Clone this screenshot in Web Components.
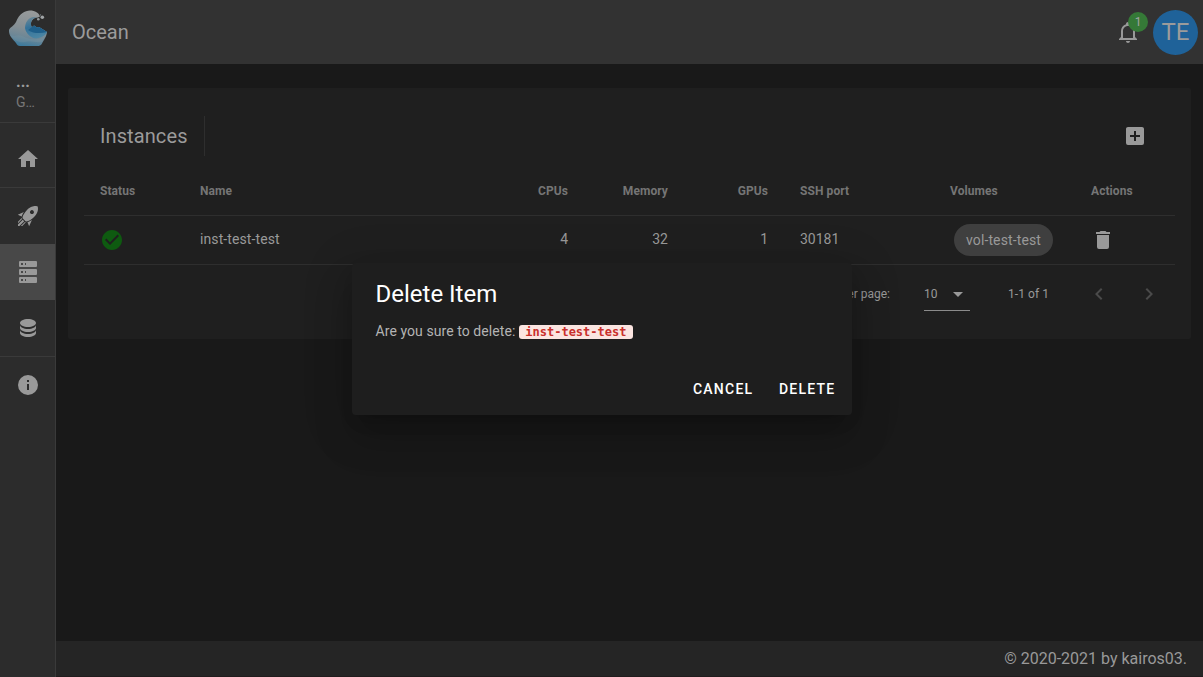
<!DOCTYPE html>
<html lang="en">
<head>
<meta charset="utf-8">
<title>Ocean</title>
<style>
html,body{margin:0;height:100%;overflow:hidden;background:#191919;font-family:Roboto,sans-serif}
</style>
</head>
<body>
<ocean-app></ocean-app>
<script>
const ICONS = {
  home:'M10,20V14H14V20H19V12H22L12,3L2,12H5V20H10Z',
  rocket:'M13.13 22.19L11.5 18.36C13.07 17.78 14.54 17 15.9 16.09L13.13 22.19M5.64 12.5L1.81 10.87L7.91 8.1C7 9.46 6.22 10.93 5.64 12.5M21.61 2.39C21.61 2.39 16.66 .269 11 5.93C8.81 8.12 7.5 10.53 6.65 12.64C6.37 13.39 6.56 14.21 7.11 14.77L9.24 16.89C9.79 17.45 10.61 17.63 11.36 17.35C13.5 16.53 15.88 15.19 18.07 13C23.73 7.34 21.61 2.39 21.61 2.39M14.54 9.46C13.76 8.68 13.76 7.41 14.54 6.63S16.59 5.85 17.37 6.63C18.14 7.41 18.15 8.68 17.37 9.46C16.59 10.24 15.32 10.24 14.54 9.46M6.24 22L9.88 18.36C9.54 18.27 9.21 18.12 8.91 17.91L4.83 22H6.24M2 22H3.41L8.18 17.24L6.76 15.83L2 20.59V22M2 19.17L6.09 15.09C5.88 14.79 5.73 14.47 5.64 14.12L2 17.76V19.17Z',
  server:'M4,1H20A1,1 0 0,1 21,2V6A1,1 0 0,1 20,7H4A1,1 0 0,1 3,6V2A1,1 0 0,1 4,1M4,9H20A1,1 0 0,1 21,10V14A1,1 0 0,1 20,15H4A1,1 0 0,1 3,14V10A1,1 0 0,1 4,9M4,17H20A1,1 0 0,1 21,18V22A1,1 0 0,1 20,23H4A1,1 0 0,1 3,22V18A1,1 0 0,1 4,17M9,5H10V3H9V5M9,13H10V11H9V13M9,21H10V19H9V21M5,3V5H7V3H5M5,11V13H7V11H5M5,19V21H7V19H5Z',
  database:'M12,3C7.58,3 4,4.79 4,7C4,9.21 7.58,11 12,11C16.42,11 20,9.21 20,7C20,4.79 16.42,3 12,3M4,9V12C4,14.21 7.58,16 12,16C16.42,16 20,14.21 20,12V9C20,11.21 16.42,13 12,13C7.58,13 4,11.21 4,9M4,14V17C4,19.21 7.58,21 12,21C16.42,21 20,19.21 20,17V14C20,16.21 16.42,18 12,18C7.58,18 4,16.21 4,14Z',
  info:'M13,9H11V7H13M13,17H11V11H13M12,2A10,10 0 0,0 2,12A10,10 0 0,0 12,22A10,10 0 0,0 22,12A10,10 0 0,0 12,2Z',
  bell:'M10 21H14C14 22.1 13.1 23 12 23S10 22.1 10 21M21 19V20H3V19L5 17V11C5 7.9 7 5.2 10 4.3V4C10 2.9 10.9 2 12 2S14 2.9 14 4V4.3C17 5.2 19 7.9 19 11V17L21 19M17 11C17 8.2 14.8 6 12 6S7 8.2 7 11V18H17V11Z',
  plusbox:'M17,13H13V17H11V13H7V11H11V7H13V11H17M19,3H5C3.89,3 3,3.89 3,5V19A2,2 0 0,0 5,21H19A2,2 0 0,0 21,19V5C21,3.89 20.1,3 19,3Z',
  check:'M12 2C6.5 2 2 6.5 2 12S6.5 22 12 22 22 17.5 22 12 17.5 2 12 2M10 17L5 12L6.41 10.59L10 14.17L17.59 6.58L19 8L10 17Z',
  trash:'M19,4H15.5L14.5,3H9.5L8.5,4H5V6H19M6,19A2,2 0 0,0 8,21H16A2,2 0 0,0 18,19V7H6V19Z',
  down:'M7,10L12,15L17,10H7Z',
  left:'M15.41,16.58L10.83,12L15.41,7.41L14,6L8,12L14,18L15.41,16.58Z',
  right:'M8.59,16.58L13.17,12L8.59,7.41L10,6L16,12L10,18L8.59,16.58Z'
};
function define(name, css, html){
  const t = document.createElement('template');
  t.innerHTML = `<style>*{box-sizing:border-box}${css}</style>${html}`;
  customElements.define(name, class extends HTMLElement{
    constructor(){ super(); this.attachShadow({mode:'open'}).append(t.content.cloneNode(true)); }
  });
}
customElements.define('md-icon', class extends HTMLElement{
  constructor(){ super(); this.attachShadow({mode:'open'}); }
  connectedCallback(){
    this.shadowRoot.innerHTML = `<style>:host{display:block;width:24px;height:24px;flex:none;color:#999}svg{display:block}</style>
    <svg width="24" height="24" viewBox="0 0 24 24" fill="currentColor" fill-rule="nonzero"><path d="${ICONS[this.getAttribute('name')]}"/></svg>`;
  }
});

define('wave-logo', ':host{display:block;width:40px;height:40px}svg{display:block}', `
<svg width="40" height="40" viewBox="0 0 40 40">
  <defs>
    <linearGradient id="w" x1=".6" y1="0" x2=".4" y2="1"><stop offset="0" stop-color="#989b9c"/><stop offset=".5" stop-color="#858f94"/><stop offset=".75" stop-color="#6d8796"/><stop offset="1" stop-color="#3c7a9d"/></linearGradient>
    <linearGradient id="s" x1=".2" y1="0" x2=".5" y2="1"><stop offset="0" stop-color="#6c8896"/><stop offset=".45" stop-color="#33729a"/><stop offset="1" stop-color="#4c86a4"/></linearGradient>
  </defs>
  <path fill="url(#w)" d="M1 22C2 19 6 18 8 14C11 6 17 2.500 22 2.500C27 2.500 31 5 32 8.500L30 9.500C25 9.500 23 13 23 16C23 19 24 20 26 17.500L29 19.500L31 19L39 24C38.500 29 35.500 32 34 35.500C33 37.500 31.500 38 29 38H12C10 38 9 37 8 35C5 31 .5 28 1 22Z"/>
  <path fill="url(#s)" d="M26 9C20 9 17 15 17 20C18 26 23 30 28 30.500C33 30 37 28 39 24L31 19L29 19.500L26 17.500C24.500 20 23 19 23 16C23 13 24 10.500 29 9.500Z"/>
  <path fill="#1f5f8a" d="M20 22L26 17.500L29 19.500L31 19L39 24C33 25.500 26 26 20 22Z"/>
  <path fill="#7895a3" d="M2 27C7 29 10 26 14 28C20 31 28 33 37 29L34 34C26 35 22 32 17 34C12 35 6 33 2 27Z" opacity=".35"/>
  <circle cx="34.300" cy="9.300" r="1.800" fill="#a0a4a6"/>
  <circle cx="30.300" cy="11.200" r="1.300" fill="#939a9d"/>
  <circle cx="32.500" cy="6.900" r=".7" fill="#7d8588"/>
</svg>`);

define('nav-item', `
:host{display:flex;height:56px;align-items:center;justify-content:center}
:host([active]){background:#484848}`, '<slot></slot>');

define('app-sidebar', `
:host{display:flex;flex-direction:column;width:56px;background:#2c2c2c;border-right:1px solid #3a3a3a}
wave-logo{margin:8px 0 0 8px}
.user{height:74px;padding:26px 0 0 16px;color:#9b9b9b}
.n{font-size:16px;font-weight:700;line-height:16px;height:19px}
.g{font-size:14px;line-height:18px;color:#777}
hr{margin:0;border:0;height:1px;background:#3a3a3a;flex:none}
.first{margin-top:8px} nav-item{padding-left:1px;flex:none}`, `
<wave-logo></wave-logo>
<div class="user"><div class="n">...</div><div class="g">G…</div></div>
<hr>
<nav-item class="first"><md-icon name="home"></md-icon></nav-item>
<hr>
<nav-item><md-icon name="rocket"></md-icon></nav-item>
<nav-item active><md-icon name="server"></md-icon></nav-item>
<nav-item><md-icon name="database"></md-icon></nav-item>
<hr>
<nav-item><md-icon name="info"></md-icon></nav-item>`);

define('app-bar', `
:host{display:flex;height:64px;background:#323232;align-items:center;padding:0 5px 0 16px;flex:none}
.t{font-size:20px;line-height:30px;color:#9b9b9b;flex:1}
.bell{position:relative;margin-right:13.5px}
.badge{position:absolute;left:12.5px;top:-8px;width:20px;height:20px;border-radius:10px;background:#357937;color:#a3a3a3;font-size:12px;line-height:20px;text-align:center}
.av{width:45px;height:45px;border-radius:50%;background:#1f6299;color:#9b9b9b;font-size:24px;line-height:45px;text-align:center}`, `
<div class="t">Ocean</div>
<div class="bell"><md-icon name="bell"></md-icon><span class="badge">1</span></div>
<div class="av">TE</div>`);

define('volume-chip', `:host{display:inline-block;margin-left:4px;height:32px;padding:0 12px;border-radius:16px;background:#3f3f3f;color:#999;font-size:14px;line-height:32px;letter-spacing:.12px;white-space:nowrap}`, '<slot></slot>');

define('instance-table', `
:host{display:block}
.row{display:grid;grid-template-columns:100px 300px 100px 100px 100px 150px 141px 100px;height:49px;border-bottom:1px solid #2e2e2e;align-items:center;font-size:14px;color:#999}
.row>*{padding:0 16px}
.row>.x{padding-bottom:2px}
.name{letter-spacing:.1px}
.head{font-size:12px;font-weight:700;color:#757575;letter-spacing:.08px}
.r{text-align:right}
md-icon.ok{color:#0e5a10} .i{display:flex}`, `
<div class="row head"><div>Status</div><div>Name</div><div class="r">CPUs</div><div class="r">Memory</div><div class="r">GPUs</div><div>SSH port</div><div>Volumes</div><div>Actions</div></div>
<div class="row"><div class="i"><md-icon class="ok" name="check"></md-icon></div><div class="x name">inst-test-test</div><div class="r x">4</div><div class="r x">32</div><div class="r x">1</div><div class="x">30181</div><div><volume-chip>vol-test-test</volume-chip></div><div class="i"><md-icon name="trash"></md-icon></div></div>`);

define('table-pager', `
:host{display:flex;height:58px;align-items:center;justify-content:flex-end;font-size:12px;color:#999;padding-right:14px}
.sel{display:flex;align-items:center;justify-content:space-between;width:46px;height:34px;border-bottom:1px solid #8b8b8b;margin:0 38px 0 34px}
.rg{width:41px;margin-right:38px;white-space:nowrap;letter-spacing:.08px}
.c{color:#4a4a4a}.c+.c{margin-left:26px}`, `
<span>Rows per page:</span>
<div class="sel"><span>10</span><md-icon name="down"></md-icon></div>
<span class="rg">1-1 of 1</span>
<md-icon class="c" name="left"></md-icon><md-icon class="c" name="right"></md-icon>`);

define('instance-card', `
:host{display:block;margin:24px 12px 0;height:251px;padding:16px;background:#1f1f1f;border-radius:2px}
.top{display:flex;height:64px;align-items:center;padding:0 28px 0 16px}
.t{font-size:20px;color:#9b9b9b;line-height:30px;width:88px;letter-spacing:.1px}
.v{width:1px;height:40px;background:#2e2e2e;margin-left:16px}
md-icon{margin-left:auto}
instance-table{margin-top:-1px}`, `
<div class="top"><span class="t">Instances</span><span class="v"></span><md-icon name="plusbox"></md-icon></div>
<instance-table></instance-table>
<table-pager></table-pager>`);

define('app-footer', `
:host{display:flex;height:36px;margin-top:auto;background:#252525;align-items:center;justify-content:flex-end;padding-right:16px;color:#999;font-size:16px;line-height:24px;border-bottom:1px solid #211c1d}`, '<slot></slot>');

define('confirm-dialog', `
:host{position:absolute;left:352px;top:263px;width:500px;height:152px;background:#1e1e1e;border-radius:4px;box-shadow:0 11px 15px -7px rgba(0,0,0,.2),0 24px 38px 3px rgba(0,0,0,.14),0 9px 46px 8px rgba(0,0,0,.12);display:flex;flex-direction:column;color:#fff;padding:15px 8.5px 8px 23.5px}
h1{margin:0;font-size:24px;font-weight:400;line-height:32px}
p{margin:10px 0 0;font-size:14px;line-height:22px;color:#b4b4b4;letter-spacing:.07px}
code{font-family:"DejaVu Sans Mono",monospace;font-size:12px;font-weight:700;letter-spacing:0;color:#c9302c;background:#fbe5e1;border-radius:3px;padding:0 6.4px;line-height:14px}
.a{display:flex;justify-content:flex-end;margin-top:auto;gap:9.5px}
button{border:0;background:none;color:#fff;font:500 14px/36px Roboto,sans-serif;letter-spacing:1.25px;padding:0 8px;height:36px;text-transform:uppercase}`, `
<h1>Delete Item</h1>
<p>Are you sure to delete: <code>inst-test-test</code></p>
<div class="a"><button>Cancel</button><button>Delete</button></div>`);

define('ocean-app', `
:host{display:flex;height:100vh;position:relative;overflow:hidden}
main{flex:1;display:flex;flex-direction:column;min-width:0}`, `
<app-sidebar></app-sidebar>
<main><app-bar></app-bar><instance-card></instance-card><app-footer>© 2020-2021 by kairos03.</app-footer></main>
<confirm-dialog></confirm-dialog>`);
</script>
</body>
</html>
